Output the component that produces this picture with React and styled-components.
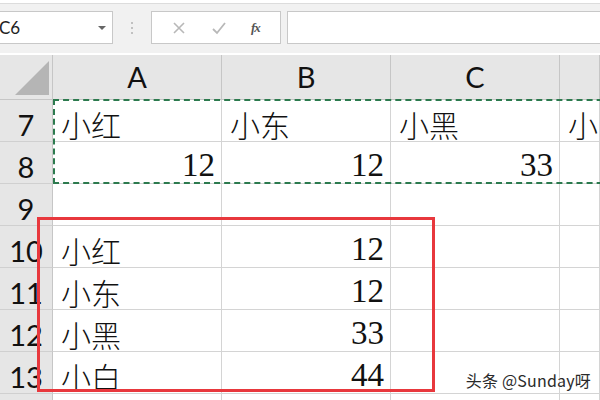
import React from 'react';
import styled, { createGlobalStyle } from 'styled-components';

const GlobalStyle = createGlobalStyle`
	html, body {
		margin: 0;
		padding: 0;
		width: 600px;
		height: 400px;
		overflow: hidden;
		background: #ffffff;
	}
	* {
		box-sizing: border-box;
	}
`;

const Page = styled.div`
	width: 600px;
	height: 400px;
	display: flex;
	flex-direction: column;
	position: relative;
	overflow: hidden;
	font-family: 'Liberation Sans', Arial, sans-serif;
`;

const Toolbar = styled.div`
	height: 50px;
	flex-shrink: 0;
	background: #f1f1f1;
	border-top: 1px solid #dcdcdc;
	margin-top: 3px;
	display: flex;
	align-items: flex-start;
	padding-top: 7px;
`;

const NameBox = styled.div`
	width: 113px;
	height: 33px;
	background: #fff;
	border: 1px solid #c8c8c8;
	border-left: none;
	display: flex;
	align-items: center;
	justify-content: space-between;
	padding: 0 6px 0 0;
	font-family: 'Lato', 'Liberation Sans', sans-serif;
	font-size: 17px;
	color: #222;
	span {
		margin-left: -1px;
	}
`;

const Caret = styled.div`
	width: 0;
	height: 0;
	border-left: 4px solid transparent;
	border-right: 4px solid transparent;
	border-top: 4px solid #666;
`;

const Grip = styled.div`
	width: 38px;
	height: 33px;
	display: flex;
	flex-direction: column;
	align-items: center;
	justify-content: center;
	gap: 3px;
	i {
		width: 2px;
		height: 2px;
		background: #b0b0b0;
		border-radius: 50%;
	}
`;

const FxButtons = styled.div`
	width: 130px;
	height: 33px;
	background: #fff;
	border: 1px solid #c8c8c8;
	display: flex;
	align-items: center;
	justify-content: space-around;
	padding: 0 8px;
	color: #b4b4b4;
`;

const FxLabel = styled.span`
	font-family: 'Liberation Serif', serif;
	font-style: italic;
	font-weight: bold;
	font-size: 13px;
	color: #555;
	letter-spacing: -1px;
`;

const FormulaInput = styled.div`
	flex: 1;
	height: 33px;
	margin-left: 6px;
	background: #fff;
	border: 1px solid #c8c8c8;
	border-right: none;
`;

const Sheet = styled.div`
	flex: 1;
	position: relative;
	display: grid;
	grid-template-columns: 53px 169px 169px 169px 1fr;
	grid-template-rows: 45px repeat(8, 42px);
	background: #fff;
	margin-top: 2px;
`;

const Corner = styled.div`
	background: #e6e6e6;
	border-right: 1px solid #c6c6c6;
	border-bottom: 1px solid #c6c6c6;
	position: relative;
	svg {
		position: absolute;
		right: 3px;
		bottom: 4px;
	}
`;

const ColHead = styled.div`
	background: #e6e6e6;
	border-right: 1px solid #c6c6c6;
	border-bottom: 1px solid #c6c6c6;
	display: flex;
	align-items: flex-end;
	justify-content: center;
	padding-bottom: 5px;
	font-family: 'Lato', 'Liberation Sans', sans-serif;
	font-size: 29px;
	color: #111;
`;

const RowHead = styled.div`
	background: #e6e6e6;
	border-right: 1px solid #c6c6c6;
	border-bottom: 1px solid #d0d0d0;
	display: flex;
	align-items: flex-end;
	justify-content: center;
	padding-bottom: 2px;
	font-family: 'Lato', 'Liberation Sans', sans-serif;
	font-size: 29px;
	line-height: 1;
	color: #111;
	white-space: nowrap;
`;

const Cell = styled.div`
	border-right: 1px solid #d4d4d4;
	border-bottom: 1px solid #d4d4d4;
	display: flex;
	align-items: flex-end;
	justify-content: ${(p) => (p.$num ? 'flex-end' : 'flex-start')};
	padding: ${(p) => (p.$num ? '0 6px 1px 8px' : '0 6px 2px 8px')};
	font-family: ${(p) =>
		p.$num
			? "'Liberation Serif', 'Times New Roman', serif"
			: "'Noto Sans CJK SC', sans-serif"};
	font-size: ${(p) => (p.$num ? '33px' : '30px')};
	font-weight: ${(p) => (p.$num ? 400 : 300)};
	line-height: 1;
	color: #111;
	white-space: nowrap;
	min-width: 0;
`;

const CopyMarquee = styled.div`
	position: absolute;
	left: 53px;
	top: 44px;
	width: 600px;
	height: 85px;
	border: 2px dashed #2c7a4e;
	pointer-events: none;
`;

const RedBox = styled.div`
	position: absolute;
	left: 37px;
	top: 162px;
	width: 398px;
	height: 175px;
	border: 3px solid #e8383d;
	pointer-events: none;
`;

const Watermark = styled.div`
	position: absolute;
	right: 9px;
	bottom: 8px;
	font-family: 'Noto Sans CJK SC', sans-serif;
	font-size: 16px;
	color: #2a2a2a;
	text-shadow: 0 0 2px #fff, 0 0 2px #fff;
	letter-spacing: 0.2px;
`;

const rows = [
	{ n: 7, cells: ['小红', '小东', '小黑', '小'] },
	{ n: 8, cells: [12, 12, 33, ''] },
	{ n: 9, cells: ['', '', '', ''] },
	{ n: 10, cells: ['小红', 12, '', ''] },
	{ n: 11, cells: ['小东', 12, '', ''] },
	{ n: 12, cells: ['小黑', 33, '', ''] },
	{ n: 13, cells: ['小白', 44, '', ''] },
	{ n: '', cells: ['', '', '', ''] },
];

export default function App() {
	return (
		<Page>
			<GlobalStyle />
			<Toolbar>
				<NameBox>
					<span>C6</span>
					<Caret />
				</NameBox>
				<Grip>
					<i />
					<i />
					<i />
				</Grip>
				<FxButtons>
					<svg width="14" height="14" viewBox="0 0 14 14">
						<path d="M2 2 L12 12 M12 2 L2 12" stroke="#b8b8b8" strokeWidth="1.6" />
					</svg>
					<svg width="16" height="14" viewBox="0 0 16 14">
						<path d="M2 8 L6 12 L14 2" stroke="#b8b8b8" strokeWidth="1.8" fill="none" />
					</svg>
					<FxLabel>fx</FxLabel>
				</FxButtons>
				<FormulaInput />
			</Toolbar>
			<Sheet>
				<Corner>
					<svg width="34" height="34" viewBox="0 0 34 34">
						<polygon points="34,0 34,34 0,34" fill="#b5b5b5" />
					</svg>
				</Corner>
				{['A', 'B', 'C', ''].map((c, i) => (
					<ColHead key={i}>{c}</ColHead>
				))}
				{rows.map((r, ri) => (
					<React.Fragment key={ri}>
						<RowHead>{r.n}</RowHead>
						{r.cells.map((v, i) => (
							<Cell key={i} $num={typeof v === 'number'}>
								{v}
							</Cell>
						))}
					</React.Fragment>
				))}
				<CopyMarquee />
				<RedBox />
			</Sheet>
			<Watermark>头条 @Sunday呀</Watermark>
		</Page>
	);
}
